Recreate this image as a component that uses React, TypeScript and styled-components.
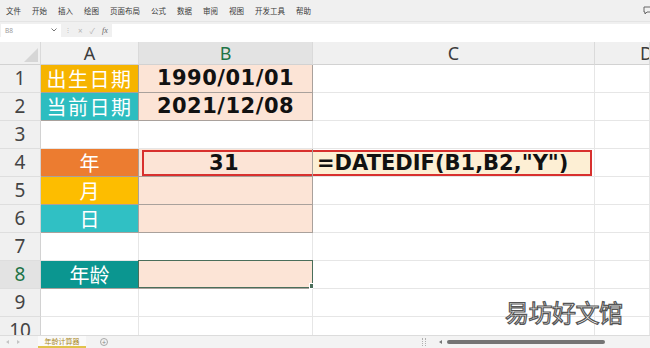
import React from 'react';
import styled, { createGlobalStyle } from 'styled-components';

const GlobalStyle = createGlobalStyle`
  html, body {
    margin: 0;
    padding: 0;
    background: #ffffff;
    overflow: hidden;
  }
  body {
    font-family: "Noto Sans", "Noto Sans CJK SC", sans-serif;
  }
`;

const CJK = '"Noto Sans CJK SC", "Noto Sans", sans-serif';
const COLS = '41px 98px 174px 282px 1fr';

const Frame = styled.div`
  position: relative;
  width: 650px;
  height: 348px;
  display: flex;
  flex-direction: column;
  overflow: hidden;
  background: #fff;
`;

const MenuBar = styled.div`
  height: 22px;
  flex: none;
  display: flex;
  align-items: center;
  gap: 11px;
  padding-left: 6px;
  background: #f0f0f0;
  border-bottom: 1px solid #e4e4e4;
  box-sizing: border-box;
  font-family: ${CJK};
  font-size: 7.5px;
  color: #3a3a3a;
  position: relative;
`;

const CommentIcon = styled.svg`
  position: absolute;
  right: -3px;
  top: 6px;
`;

const FormulaBar = styled.div`
  height: 15px;
  flex: none;
  display: flex;
  align-items: center;
  background: #f0f0f0;
  padding-top: 1px;
  box-sizing: border-box;
`;

const NameBox = styled.div`
  width: 60px;
  height: 13px;
  margin-left: 1px;
  background: #fff;
  display: flex;
  align-items: center;
  justify-content: space-between;
  padding: 0 4px;
  box-sizing: border-box;
  font-size: 6.5px;
  color: #9a9a9a;
`;

const BarIcons = styled.div`
  width: 51px;
  display: flex;
  align-items: center;
  gap: 7px;
  padding-left: 4px;
  box-sizing: border-box;
  color: #b4b4b4;
  font-size: 8px;
`;

const Dots = styled.span`
  font-size: 6px;
`;

const Fx = styled.span`
  font-family: "Liberation Serif", serif;
  font-style: italic;
  color: #666;
  font-size: 8px;
`;

const Input = styled.div`
  flex: 1;
  height: 13px;
  background: #fff;
`;

const Sheet = styled.div`
  flex: 1;
  overflow: hidden;
  padding-top: 5px;
  background: #fff;
`;

const Row = styled.div<{ $h: number }>`
  display: grid;
  grid-template-columns: ${COLS};
  height: ${(p) => p.$h}px;
`;

const ColHead = styled.div<{ $sel?: boolean; $clip?: boolean }>`
  background: ${(p) => (p.$sel ? '#e3e3e3' : '#f0f0f0')};
  color: ${(p) => (p.$sel ? '#217346' : '#3c3c3c')};
  border-right: 1px solid #dadada;
  border-bottom: 1px solid #d2d2d2;
  display: flex;
  align-items: center;
  justify-content: ${(p) => (p.$clip ? 'flex-start' : 'center')};
  padding-left: ${(p) => (p.$clip ? '45px' : '0')};
  font-size: 18px;
  line-height: 1;
  overflow: hidden;
  white-space: nowrap;
`;

const Corner = styled.div`
  background: #f0f0f0;
  border-right: 1px solid #dadada;
  border-bottom: 1px solid #d2d2d2;
  display: flex;
  align-items: flex-end;
  justify-content: flex-end;
  padding: 0 2px 2px 0;
  box-sizing: border-box;
`;

const RowHead = styled.div<{ $sel?: boolean }>`
  background: ${(p) => (p.$sel ? '#e3e3e3' : '#f0f0f0')};
  color: ${(p) => (p.$sel ? '#217346' : '#444')};
  border-right: 1px solid #d2d2d2;
  border-bottom: 1px solid #dedede;
  display: flex;
  align-items: center;
  justify-content: center;
  font-size: 19px;
  line-height: 1;
  overflow: hidden;
`;

const Cell = styled.div<{
  $bg?: string;
  $edge?: string;
}>`
  background: ${(p) => p.$bg || '#fff'};
  border-right: 1px solid ${(p) => p.$edge || '#e6e6e6'};
  border-bottom: 1px solid ${(p) => p.$edge || '#e6e6e6'};
  display: flex;
  align-items: center;
  justify-content: center;
  box-sizing: border-box;
  position: relative;
  white-space: nowrap;
`;

const Label = styled.span<{ $spacing?: number }>`
  font-family: ${CJK};
  font-size: 20px;
  color: #fff;
  letter-spacing: ${(p) => p.$spacing ?? 0}px;
  line-height: 1;
`;

const Value = styled.span<{ $tight?: boolean }>`
  font-family: "DejaVu Sans", sans-serif;
  font-weight: bold;
  font-size: 21px;
  letter-spacing: ${(p) => (p.$tight ? '0' : '0.5px')};
  color: #111;
  line-height: 1;
`;

const RedBox = styled.div<{ $side: 'left' | 'right'; $bg: string }>`
  position: absolute;
  top: 1px;
  bottom: 0;
  left: ${(p) => (p.$side === 'left' ? '3px' : '0')};
  right: ${(p) => (p.$side === 'right' ? '2px' : '0')};
  border: 2px solid #d8302e;
  border-${(p) => (p.$side === 'left' ? 'right' : 'left')}: none;
  background: ${(p) => p.$bg};
  display: flex;
  align-items: center;
  justify-content: ${(p) => (p.$side === 'left' ? 'center' : 'flex-start')};
  padding-left: ${(p) => (p.$side === 'right' ? '4px' : '0')};
  padding-right: ${(p) => (p.$side === 'left' ? '8px' : '0')};
  box-sizing: border-box;
`;

const Selected = styled.div`
  position: absolute;
  inset: -1px -1px 0 -1px;
  border: 1px solid #4a6e5a;
`;

const Handle = styled.div`
  position: absolute;
  right: -3px;
  bottom: -2px;
  width: 4px;
  height: 4px;
  background: #4a6e5a;
  border: 1px solid #fff;
`;

const TabBar = styled.div`
  height: 13px;
  flex: none;
  display: flex;
  align-items: center;
  background: #f3f3f3;
  border-top: 1px solid #dcdcdc;
  box-sizing: border-box;
  position: relative;
`;

const Arrows = styled.div`
  width: 38px;
  display: flex;
  align-items: center;
  gap: 8px;
  padding-left: 6px;
  box-sizing: border-box;
`;

const Tri = styled.div<{ $dir: 'left' | 'right'; $color?: string }>`
  width: 0;
  height: 0;
  border-top: 2px solid transparent;
  border-bottom: 2px solid transparent;
  border-${(p) => (p.$dir === 'left' ? 'right' : 'left')}: 3px solid ${(p) => p.$color || '#c4c4c4'};
`;

const Tab = styled.div`
  width: 48px;
  height: 12px;
  background: #fafafa;
  border-bottom: 2px solid #e0c34a;
  box-sizing: border-box;
  display: flex;
  align-items: center;
  justify-content: center;
  font-family: ${CJK};
  font-size: 7px;
  color: #a98a1e;
`;

const AddTab = styled.div`
  margin-left: 14px;
  width: 8px;
  height: 8px;
  border: 1px solid #a8a8a8;
  border-radius: 50%;
  box-sizing: border-box;
  display: flex;
  align-items: center;
  justify-content: center;
  font-size: 7px;
  line-height: 1;
  color: #888;
`;

const Scroll = styled.div`
  margin-left: auto;
  margin-right: 45px;
  display: flex;
  align-items: center;
  gap: 5px;
`;

const Grip = styled.div`
  width: 2px;
  height: 8px;
  border-left: 1px dotted #b0b0b0;
  border-right: 1px dotted #b0b0b0;
  margin-right: 8px;
`;

const Thumb = styled.div`
  width: 158px;
  height: 4px;
  border-radius: 2px;
  background: #747474;
`;

const Watermark = styled.div`
  position: absolute;
  left: 505px;
  top: 298px;
  font-family: ${CJK};
  font-size: 24px;
  line-height: 1.2;
  color: #fff;
  -webkit-text-stroke: 1.2px #555;
  letter-spacing: -0.5px;
`;

type Spec = {
  a?: { text: string; bg: string; spacing?: number };
  b?: string;
  bFill?: boolean;
};

const PEACH = '#fce4d6';
const EDGE = '#a9a19c';

const rows: Spec[] = [
  { a: { text: '出生日期', bg: '#f6b400', spacing: 1.5 }, b: '1990/01/01', bFill: true },
  { a: { text: '当前日期', bg: '#2dbdc0', spacing: 1.5 }, b: '2021/12/08', bFill: true },
  {},
  { a: { text: '年', bg: '#ec7c30' }, bFill: true },
  { a: { text: '月', bg: '#fdbd00' }, bFill: true },
  { a: { text: '日', bg: '#30c0c4' }, bFill: true },
  {},
  { a: { text: '年龄', bg: '#0b9690' }, bFill: true },
  {},
  {},
];

const menu = ['文件', '开始', '插入', '绘图', '页面布局', '公式', '数据', '审阅', '视图', '开发工具', '帮助'];

export default function App() {
  return (
    <Frame>
      <GlobalStyle />
      <MenuBar>
        {menu.map((m) => (
          <span key={m}>{m}</span>
        ))}
        <CommentIcon width="10" height="9" viewBox="0 0 10 9">
          <path d="M1 1h8v5H4L2 8V6H1z" fill="none" stroke="#666" strokeWidth="1" />
        </CommentIcon>
      </MenuBar>
      <FormulaBar>
        <NameBox>
          <span>B8</span>
          <svg width="6" height="4" viewBox="0 0 6 4">
            <path d="M0.5 0.5L3 3l2.5-2.5" fill="none" stroke="#777" strokeWidth="1" />
          </svg>
        </NameBox>
        <BarIcons>
          <Dots>⋮</Dots>
          <span>×</span>
          <span>✓</span>
          <Fx>fx</Fx>
        </BarIcons>
        <Input />
      </FormulaBar>
      <Sheet>
        <Row $h={23}>
          <Corner>
            <svg width="14" height="14" viewBox="0 0 14 14">
              <path d="M14 0V14H0z" fill="#d6d6d6" />
            </svg>
          </Corner>
          <ColHead>A</ColHead>
          <ColHead $sel>B</ColHead>
          <ColHead>C</ColHead>
          <ColHead $clip>D</ColHead>
        </Row>
        {rows.map((r, i) => {
          const n = i + 1;
          return (
            <Row $h={28} key={n}>
              <RowHead $sel={n === 8}>{n}</RowHead>
              {r.a ? (
                <Cell $bg={r.a.bg} $edge={EDGE}>
                  <Label $spacing={r.a.spacing}>{r.a.text}</Label>
                </Cell>
              ) : (
                <Cell />
              )}
              {n === 4 ? (
                <Cell $bg={PEACH} $edge={EDGE}>
                  <RedBox $side="left" $bg={PEACH}>
                    <Value>31</Value>
                  </RedBox>
                </Cell>
              ) : r.bFill ? (
                <Cell $bg={PEACH} $edge={EDGE}>
                  {r.b && <Value>{r.b}</Value>}
                  {n === 8 && (
                    <Selected>
                      <Handle />
                    </Selected>
                  )}
                </Cell>
              ) : (
                <Cell />
              )}
              {n === 4 ? (
                <Cell>
                  <RedBox $side="right" $bg="#fdefd4">
                    <Value $tight>=DATEDIF(B1,B2,"Y")</Value>
                  </RedBox>
                </Cell>
              ) : (
                <Cell />
              )}
              <Cell />
            </Row>
          );
        })}
      </Sheet>
      <TabBar>
        <Arrows>
          <Tri $dir="left" />
          <Tri $dir="right" />
        </Arrows>
        <Tab>年龄计算器</Tab>
        <AddTab>+</AddTab>
        <Scroll>
          <Grip />
          <Tri $dir="left" $color="#777" />
          <Thumb />
        </Scroll>
      </TabBar>
      <Watermark>易坊好文馆</Watermark>
    </Frame>
  );
}
